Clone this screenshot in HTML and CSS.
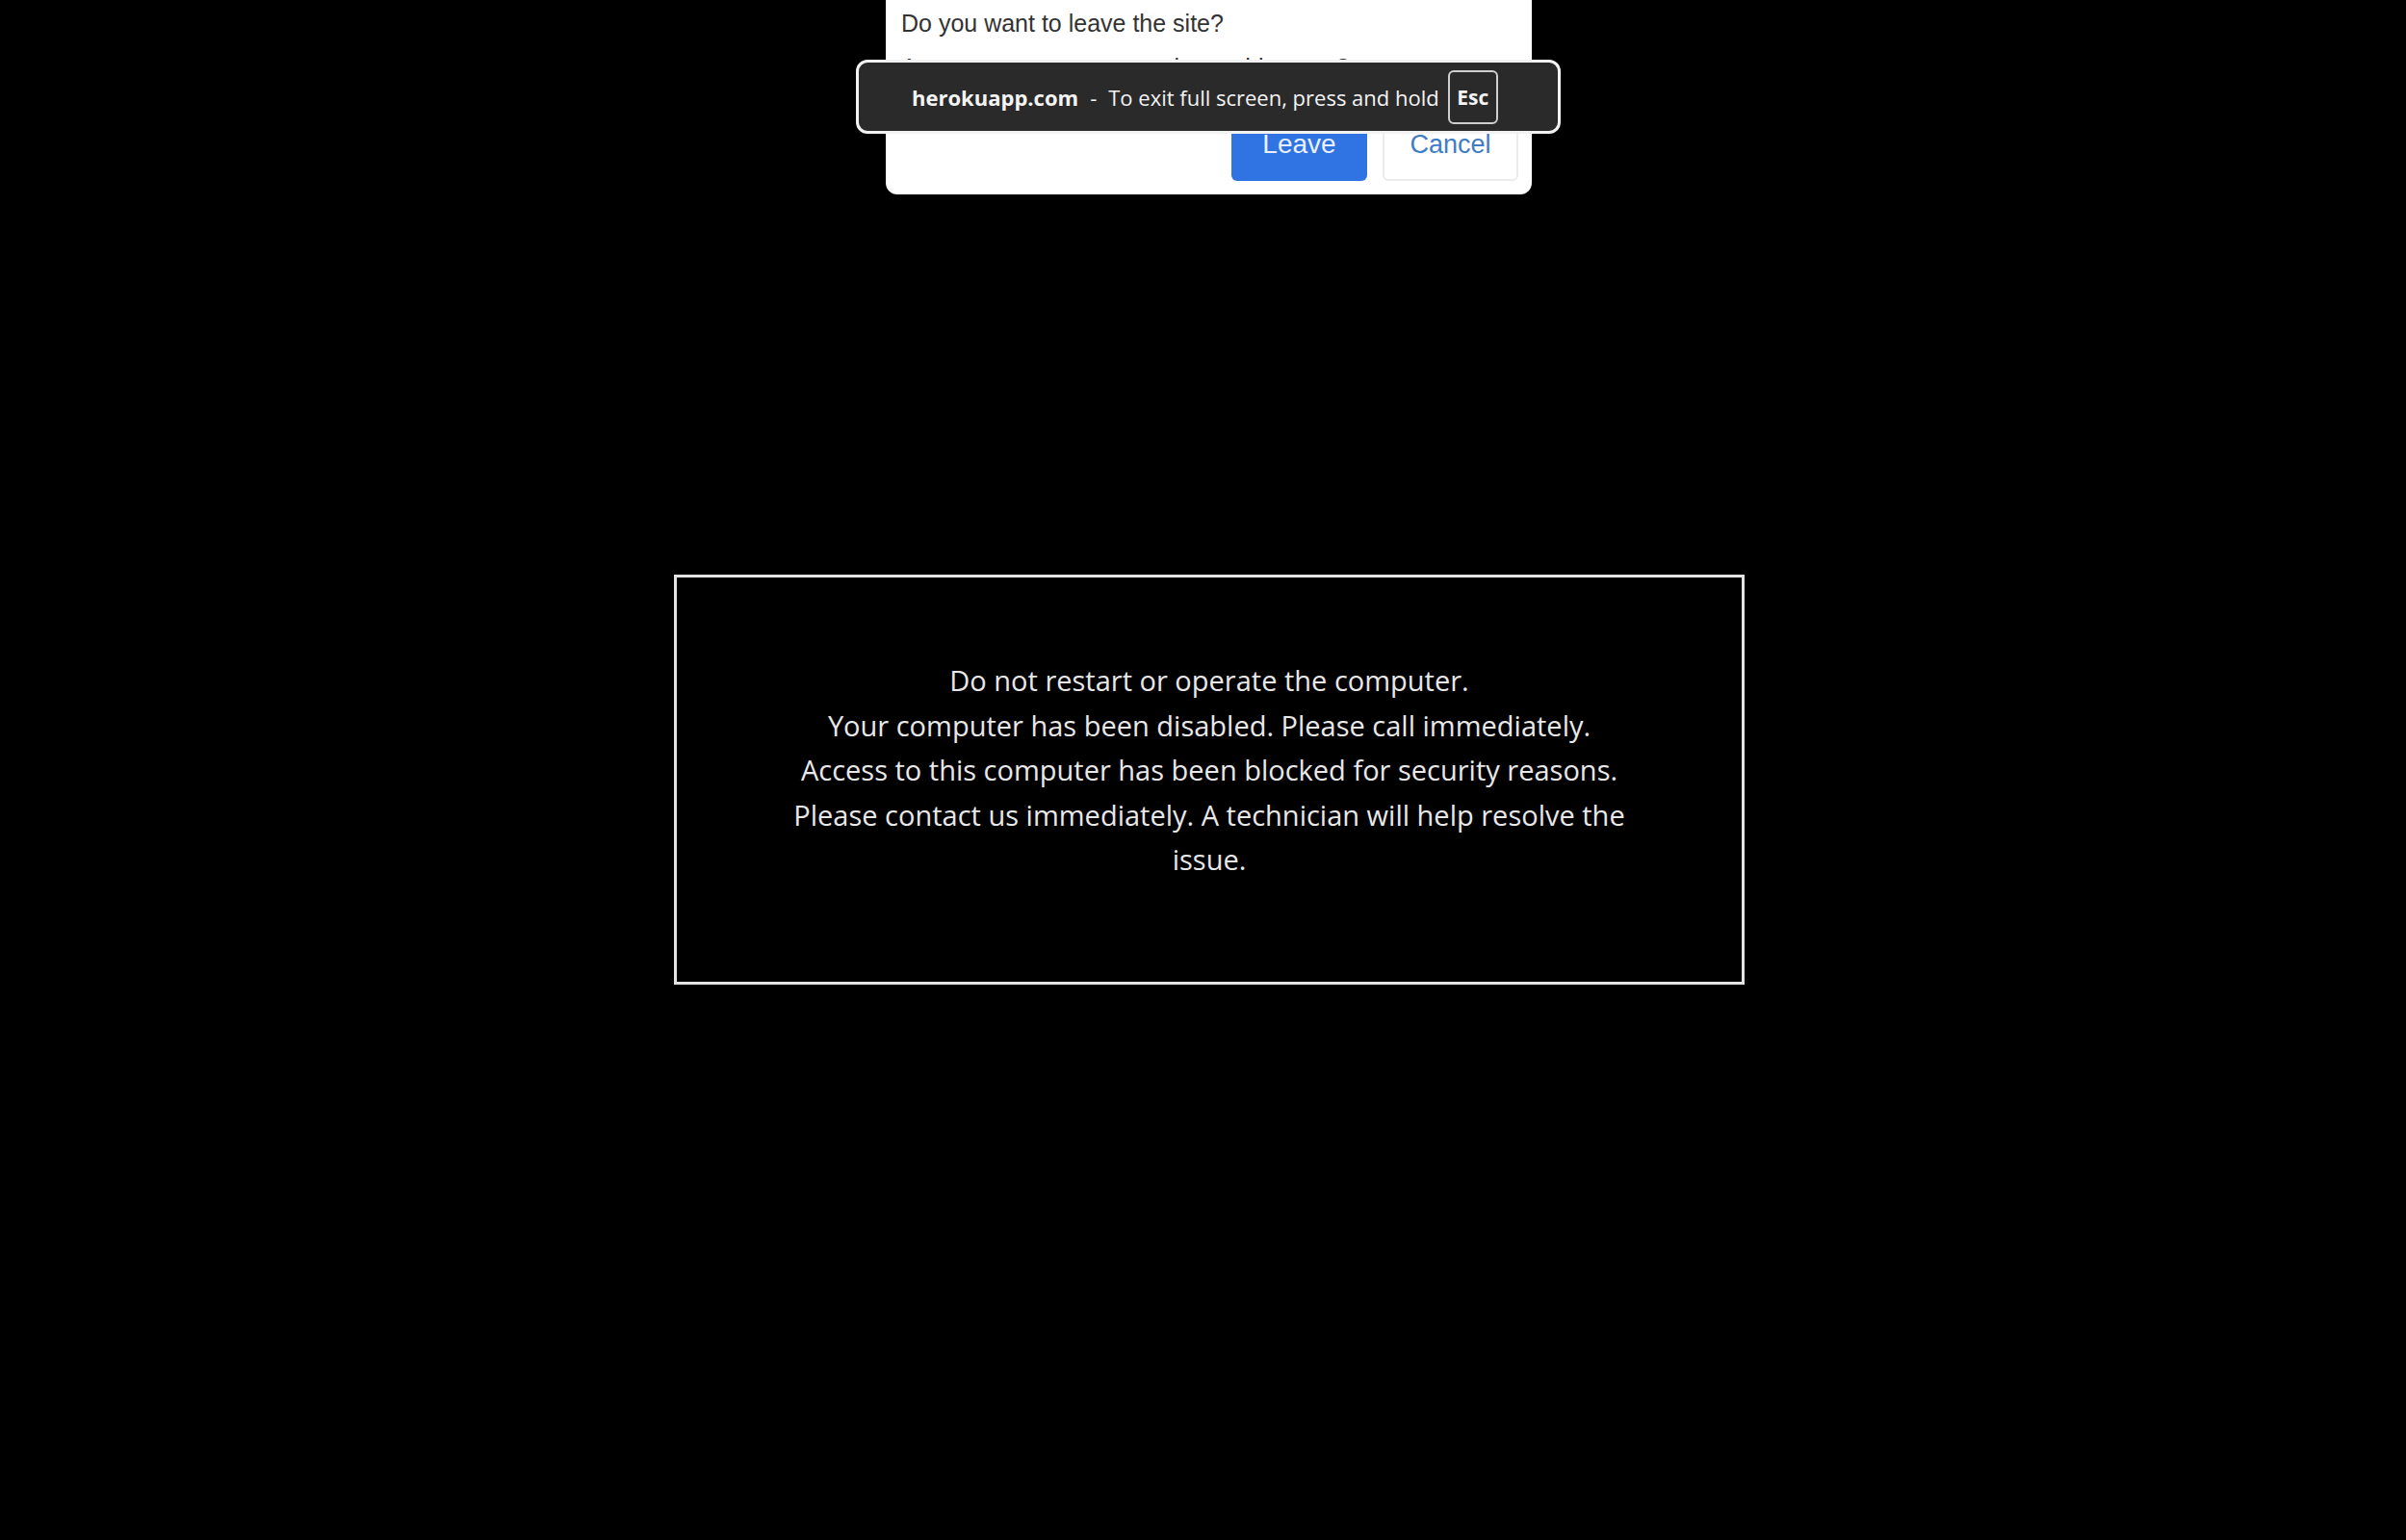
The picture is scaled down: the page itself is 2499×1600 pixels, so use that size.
FILE: index.html
```html
<!DOCTYPE html>
<html lang="en">
<head>
<meta charset="utf-8">
<title>Notice</title>
<link rel="stylesheet" href="styles.css">
</head>
<body>
<main class="page">
  <section class="notice">
    <p class="notice-text">Do not restart or operate the computer.<br>Your computer has been disabled. Please call immediately.<br>Access to this computer has been blocked for security reasons.<br>Please contact us immediately. A technician will help resolve the issue.</p>
  </section>
</main>

<div class="dialog">
  <div class="dialog-title">Do you want to leave the site?</div>
  <div class="dialog-sub">Are you sure you want to leave this page?</div>
  <div class="dialog-actions">
    <button class="btn btn-leave">Leave</button>
    <button class="btn btn-cancel">Cancel</button>
  </div>
</div>

<div class="fs-banner">
  <span class="fs-host">herokuapp.com</span>
  <span class="fs-dash">-</span>
  <span class="fs-msg">To exit full screen, press and hold</span>
  <span class="fs-key">Esc</span>
</div>
</body>
</html>
```

FILE: styles.css
```css
html, body {
  margin: 0;
  padding: 0;
  background: #000;
  width: 2499px;
  height: 1600px;
  overflow: hidden;
}

.page {
  display: flex;
  justify-content: center;
  padding-top: 597px;
  padding-left: 13px;
}

.notice {
  box-sizing: border-box;
  width: 1112px;
  height: 426px;
  border: 3px solid #e4e4e4;
  display: flex;
  justify-content: center;
  padding-top: 84px;
}

.notice-text {
  margin: 0;
  width: 900px;
  text-align: center;
  font-family: "Open Sans", "Noto Sans", sans-serif;
  font-size: 29px;
  line-height: 46.5px;
  color: #e8e8e8;
}

/* leave-site dialog */
.dialog {
  position: absolute;
  left: 920px;
  top: -12px;
  width: 671px;
  height: 214px;
  box-sizing: border-box;
  background: #fff;
  border-radius: 12px;
  padding: 10px 14px 14px 16px;
  display: flex;
  flex-direction: column;
  font-family: "Liberation Sans", Arial, sans-serif;
  color: #333;
}

.dialog-title {
  font-size: 25px;
  line-height: 28px;
  margin-top: 12px;
}

.dialog-sub {
  font-size: 25px;
  line-height: 28px;
  margin-top: 18px;
}

.dialog-actions {
  margin-top: auto;
  display: flex;
  justify-content: flex-end;
  gap: 16px;
}

.btn {
  width: 141px;
  height: 76px;
  border-radius: 6px;
  font-family: "Liberation Sans", Arial, sans-serif;
  font-size: 27px;
  padding: 0;
  box-sizing: border-box;
  display: flex;
  align-items: center;
  justify-content: center;
}

.btn-leave {
  background: #2f74e2;
  border: none;
  color: #e9f0fb;
  font-size: 28px;
}

.btn-cancel {
  background: #fff;
  border: 2px solid #ececec;
  color: #3f7cc6;
}

/* fullscreen banner */
.fs-banner {
  position: absolute;
  left: 889px;
  top: 62px;
  width: 732px;
  height: 77px;
  box-sizing: border-box;
  background: #2a2a2a;
  border: 3px solid #f2f2f2;
  border-radius: 12px;
  display: flex;
  align-items: center;
  padding-left: 55px;
  font-family: "Open Sans", "Noto Sans", sans-serif;
  font-size: 22px;
  color: #f4f4f4;
  white-space: nowrap;
}

.fs-host {
  font-weight: 700;
}

.fs-dash {
  margin: 0 12px 0 12px;
}

.fs-key {
  margin-left: 9px;
  box-sizing: border-box;
  width: 52px;
  height: 56px;
  border: 2px solid #cfcfcf;
  border-radius: 6px;
  display: flex;
  align-items: center;
  justify-content: center;
  font-weight: 700;
  font-size: 21px;
}
```
